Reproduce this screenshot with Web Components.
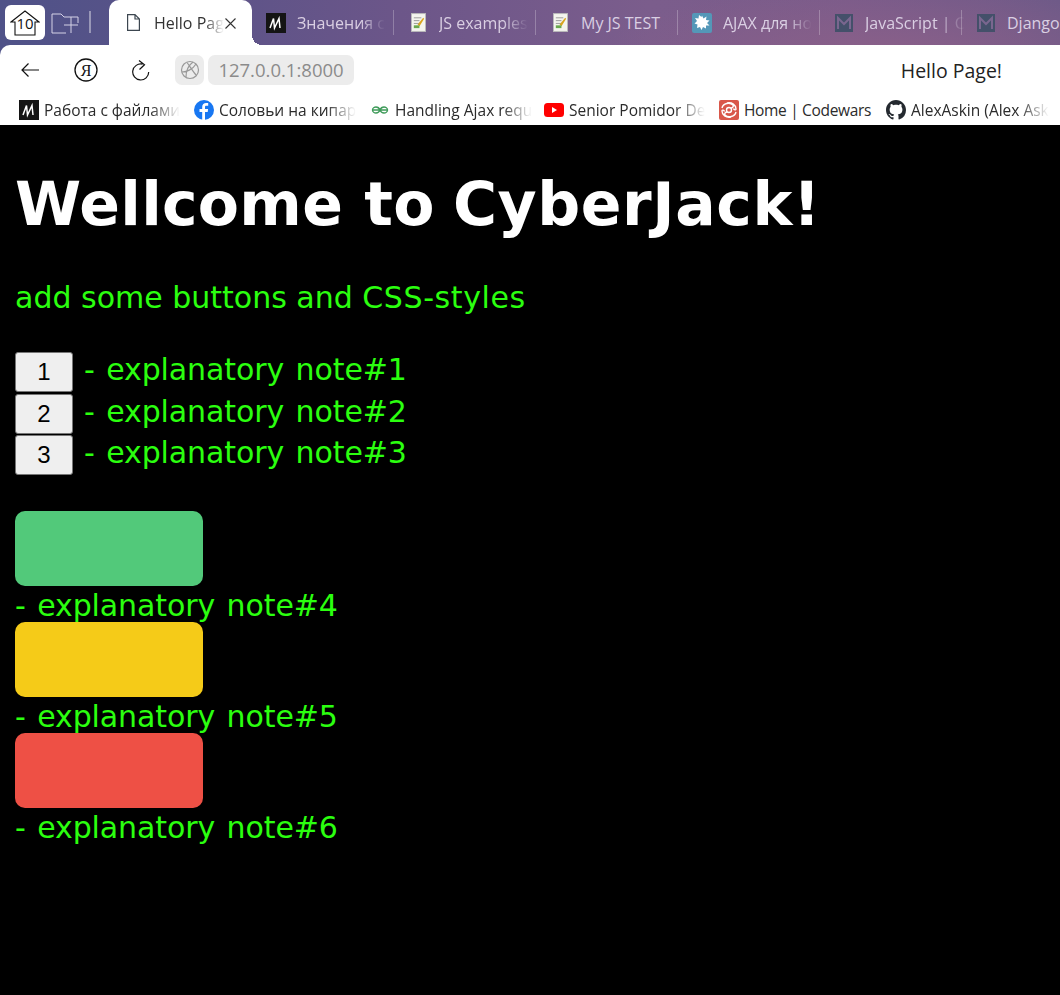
<!DOCTYPE html>
<html>
<head>
<meta charset="utf-8">
<title>Hello Page!</title>
<style>
  html, body { margin: 0; padding: 0; background: #000; }
  body { width: 1060px; height: 995px; overflow: hidden; }
</style>
</head>
<body>
<browser-chrome>
  <browser-tab slot="tabs" active label="Hello Pag">
    <svg slot="icon" width="13" height="17" viewBox="0 0 13 17" fill="none" stroke="#3c4650" stroke-width="1.2"><path d="M.6.6h7.400l4.400 4.400v11.400H.6zM8 .6v4.400h4.400"/></svg>
  </browser-tab>
  <browser-tab slot="tabs" label="Значения с">
    <svg slot="icon" width="20" height="20" viewBox="0 0 20 20"><rect width="20" height="20" fill="#141414"/><path d="M4 15L7.500 5.500 8.500 15 13 5.500 14 15" fill="none" stroke="#fff" stroke-width="1.500"/></svg>
  </browser-tab>
  <browser-tab slot="tabs" label="JS examples">
    <svg slot="icon" width="15" height="19" viewBox="0 0 16 20"><rect x=".5" y=".5" width="15" height="19" fill="#f4f4ee" stroke="#bbb"/><path d="M3 5h8M3 8h6M3 11h7" stroke="#999"/><path d="M7 12l6-7 1 1-5 8z" fill="#d9a520"/><rect x="3" y="13" width="6" height="3" fill="#6aa84f"/></svg>
  </browser-tab>
  <browser-tab slot="tabs" label="My JS TEST" nofade>
    <svg slot="icon" width="15" height="19" viewBox="0 0 16 20"><rect x=".5" y=".5" width="15" height="19" fill="#f4f4ee" stroke="#bbb"/><path d="M3 5h8M3 8h6M3 11h7" stroke="#999"/><path d="M7 12l6-7 1 1-5 8z" fill="#d9a520"/><rect x="3" y="13" width="6" height="3" fill="#6aa84f"/></svg>
  </browser-tab>
  <browser-tab slot="tabs" label="AJAX для но">
    <svg slot="icon" width="20" height="20" viewBox="0 0 20 20"><rect width="20" height="20" rx="2" fill="#5497b8"/><path d="M10 2.500l1.500 3 3-2-.5 3.500 3.500.5-2.500 2.500 2.500 2.500-3.500 0 0 3-3-1.500-1.500 3-1.500-3-3 1 .5-3.500-3-1 2.500-2.500-2-3 3.500.5.5-3.500 2.500 2z" fill="#fff"/></svg>
  </browser-tab>
  <browser-tab slot="tabs" label="JavaScript | С">
    <svg slot="icon" width="18" height="18" viewBox="0 0 18 18"><rect width="18" height="18" fill="#44506a"/><path d="M3 15V4l6 6 6-6v11" fill="none" stroke="#7a668f" stroke-width="2"/></svg>
  </browser-tab>
  <browser-tab slot="tabs" label="Django" nofade>
    <svg slot="icon" width="18" height="18" viewBox="0 0 18 18"><rect width="18" height="18" fill="#44506a"/><path d="M3 15V4l6 6 6-6v11" fill="none" stroke="#7a668f" stroke-width="2"/></svg>
  </browser-tab>

  <bookmark-item slot="bookmarks" label="Работа с файлами" w="175">
    <svg slot="icon" width="20" height="20" viewBox="0 0 20 20"><rect width="20" height="20" fill="#141414"/><path d="M4 15L7.500 5.500 8.500 15 13 5.500 14 15" fill="none" stroke="#fff" stroke-width="1.500"/></svg>
  </bookmark-item>
  <bookmark-item slot="bookmarks" label="Соловьи на кипар" w="176">
    <svg slot="icon" width="20" height="20" viewBox="0 0 20 20"><circle cx="10" cy="10" r="10" fill="#1877f2"/><path d="M11 20v-8h2.700l.4-3H11V7.200c0-.9.300-1.400 1.500-1.400H14.200V3.100c-.5-.1-1.300-.1-2.100-.1-2.200 0-3.900 1.300-3.900 3.900V9H5.500v3h2.700v8z" fill="#fff"/></svg>
  </bookmark-item>
  <bookmark-item slot="bookmarks" label="Handling Ajax requ" w="174">
    <svg slot="icon" width="18" height="10" viewBox="0 0 18 10" fill="none" stroke="#3f9b5a" stroke-width="1.400"><path d="M1 5h16M9 5C8 2.500 6.500 2 5 2S1.500 3 1.500 5 3.500 8 5 8s3-.5 4-3zM9 5c1-2.500 2.500-3 4-3s3.500 1 3.500 3-2 3-3.500 3-3-.5-4-3z"/></svg>
  </bookmark-item>
  <bookmark-item slot="bookmarks" label="Senior Pomidor De" w="175">
    <svg slot="icon" width="20" height="14" viewBox="0 0 20 14"><rect width="20" height="14" rx="3.500" fill="#f00"/><path d="M8 4l5 3-5 3z" fill="#fff"/></svg>
  </bookmark-item>
  <bookmark-item slot="bookmarks" label="Home | Codewars" w="167" nofade style="letter-spacing:-.33px">
    <svg slot="icon" width="20" height="20" viewBox="0 0 20 20"><rect width="20" height="20" rx="2" fill="#d9574a"/><g fill="none" stroke="#fff" stroke-width="1.400"><circle cx="10" cy="10" r="2.500"/><path d="M3 8c1-5 8-6 11-3 1 2-1 3-2 3M17 12c-1 5-8 6-11 3-1-2 1-3 2-3M8 3c5-1 9 2 9 6 0 1.500-2 1-2.500-.5M12 17c-5 1-9-2-9-6 0-1.500 2-1 2.500.5"/></g></svg>
  </bookmark-item>
  <bookmark-item slot="bookmarks" label="AlexAskin (Alex Ask" w="154">
    <svg slot="icon" width="20" height="20" viewBox="0 0 16 16"><path fill="#24292f" d="M8 0C3.580 0 0 3.580 0 8c0 3.540 2.290 6.530 5.470 7.590.4.070.55-.17.55-.38 0-.19-.01-.82-.01-1.490-2.010.37-2.530-.49-2.690-.94-.09-.23-.48-.94-.82-1.130-.28-.15-.68-.52-.01-.53.63-.01 1.080.58 1.230.82.720 1.210 1.870.87 2.330.66.070-.52.280-.87.510-1.070-1.780-.2-3.640-.89-3.640-3.950 0-.87.310-1.590.820-2.150-.08-.2-.36-1.020.08-2.120 0 0 .67-.21 2.200.82.640-.18 1.320-.27 2-.27s1.360.09 2 .27c1.530-1.040 2.200-.82 2.200-.82.440 1.100.16 1.920.08 2.120.51.560.82 1.270.82 2.150 0 3.070-1.870 3.750-3.650 3.950.29.250.54.730.54 1.480 0 1.070-.01 1.930-.01 2.200 0 .21.150.46.550.38A8.010 8.010 0 0016 8c0-4.420-3.580-8-8-8z"/></svg>
  </bookmark-item>
</browser-chrome>

<page-content>
  <h-title>Wellcome to <span style="margin-left:-3px;letter-spacing:.6px">CyberJack!</span></h-title>
  <note-text>add some buttons and <span style="letter-spacing:.6px">CSS-styles</span></note-text>
  <button-notes>
    <note-button num="1">- explanatory note#1</note-button>
    <note-button num="2">- explanatory note#2</note-button>
    <note-button num="3">- explanatory note#3</note-button>
  </button-notes>
  <color-notes>
    <color-note color="#52c97a">- explanatory note#4</color-note>
    <color-note color="#f5cb18">- explanatory note#5</color-note>
    <color-note color="#ee5045">- explanatory note#6</color-note>
  </color-notes>
</page-content>

<script>
class BrowserChrome extends HTMLElement {
  constructor() {
    super();
    this.attachShadow({ mode: 'open' });
    this.shadowRoot.innerHTML = `
      <style>
        :host { display: block; height: 125px; background: #fff; font-family: "Open Sans", "Noto Sans", sans-serif; }
        .strip {
          height: 45px; display: flex; align-items: flex-start; overflow: hidden;
          background:
            radial-gradient(ellipse 280px 70px at 880px 55px, #8a6089, transparent),
            linear-gradient(90deg, #4f5288 0, #5b5388 200px, #6c5689 400px, #7b5d8c 650px, #7a5b8a 850px, #6f5a88 1060px);
        }
        .home { display: flex; align-items: flex-start; padding: 5px 0 0 5px; width: 109px; height: 45px; box-sizing: border-box; flex: none; }
        .home-btn { width: 40px; height: 35px; background: #fff; border-radius: 6px; display: flex; align-items: center; justify-content: center; position: relative; color: #111; flex: none; }
        .home-btn span { position: absolute; top: 10px; left: 0; right: 0; text-align: center; font-size: 15px; line-height: 17px; }
        .folder { margin: 8px 0 0 6px; flex: none; }
        .divider { width: 2px; height: 22px; background: rgba(255,255,255,.4); margin: 6px 0 0 10px; flex: none; }
        .tabs { display: flex; }
        .toolbar-bg { background: #4f5288; }
        .toolbar { height: 50px; display: flex; align-items: center; background: #fff; border-top-left-radius: 10px; }
        .nav { display: flex; align-items: center; width: 175px; flex: none; padding-left: 20px; box-sizing: border-box; }
        .nav svg { display: block; flex: none; }
        .gap1 { width: 34px; } .gap2 { width: 34px; }
        .globe { width: 29px; height: 30px; border-radius: 7px; background: #ececec; display: flex; align-items: center; justify-content: center; flex: none; }
        .url { margin-left: 4px; width: 146px; height: 30px; border-radius: 7px; background: #ececec; color: #8b8b8b; font-size: 18.500px; line-height: 30px; text-align: center; flex: none; }
        .title { margin-left: auto; margin-right: 58px; font-size: 19.500px; color: #222; }
        .bookmarks { height: 30px; display: flex; align-items: center; padding-left: 19px; }
      </style>
      <div class="strip">
        <div class="home">
          <div class="home-btn">
            <svg width="30" height="26" viewBox="0 0 30 26" fill="none" stroke="#111" stroke-width="1.100"><path d="M5 12H1L15 1l14 11h-4v13H5z"/></svg>
            <span>10</span>
          </div>
          <svg class="folder" width="28" height="21" viewBox="0 0 28 21" fill="none" stroke="#d5d2e6" stroke-width="1"><path d="M15 20H1V1h9l3 3h14v6M20 4v16M13 12h14"/></svg>
          <div class="divider"></div>
        </div>
        <div class="tabs"><slot name="tabs"></slot></div>
      </div>
      <div class="toolbar-bg">
        <div class="toolbar">
          <div class="nav">
            <svg width="20" height="16" viewBox="0 0 20 16" fill="none" stroke="#111" stroke-width="1.200"><path d="M19 8H2M8.500 1.500L2 8l6.500 6.500"/></svg>
            <div class="gap1"></div>
            <svg width="24" height="24" viewBox="0 0 24 24" fill="none" stroke="#111" stroke-width="1.300"><circle cx="12" cy="12" r="11"/><text x="12" y="17.500" text-anchor="middle" font-family="Liberation Serif, serif" font-size="16" fill="#111" stroke="none">Я</text></svg>
            <div class="gap2"></div>
            <svg width="18" height="21" viewBox="0 0 18 21" fill="none" stroke="#111" stroke-width="1.200"><path d="M10.500 4.200A8 8 0 1 0 16.700 12M7 .5l5.500 4.200L7.500 9.500"/></svg>
          </div>
          <div class="globe">
            <svg width="20" height="20" viewBox="0 0 20 20" fill="none" stroke="#999" stroke-width="1.200"><circle cx="10" cy="10" r="8.500"/><path d="M2 12c5 0 11-3 14-8M6 17C6 10 9 5 13 2M7 2.500c3 4 6 9 9 12.500"/></svg>
          </div>
          <div class="url">127.0.0.1:8000</div>
          <div class="title">Hello Page!</div>
        </div>
      </div>
      <div class="bookmarks"><slot name="bookmarks"></slot></div>
    `;
  }
}

class BrowserTab extends HTMLElement {
  constructor() {
    super();
    this.attachShadow({ mode: 'open' });
  }
  connectedCallback() {
    const label = this.getAttribute('label');
    const active = this.hasAttribute('active');
    const fade = this.hasAttribute('nofade') ? '' : 'fade';
    this.shadowRoot.innerHTML = `
      <style>
        :host { display: block; flex: none; }
        .tab { box-sizing: border-box; width: 142px; height: 45px; display: flex; align-items: center; padding-left: 14px; gap: 11px; position: relative; color: #dacfe3; font-size: 16px; white-space: nowrap; }
        .tab.active { width: 143px; background: #fff; color: #333; border-radius: 10px 10px 0 0; }
        .tab.active::after { content: ""; position: absolute; right: -10px; bottom: 0; width: 10px; height: 10px; background: radial-gradient(circle at 100% 0, transparent 10px, #fff 10px); }
        .ico { width: 20px; display: flex; justify-content: center; flex: none; }
        .ico ::slotted(svg) { display: block; }
        .label { flex: none; }
        .fade { -webkit-mask-image: linear-gradient(90deg, #000 72%, transparent); mask-image: linear-gradient(90deg, #000 72%, transparent); }
        .close { position: absolute; right: 16px; top: 18px; }
        .sep { position: absolute; right: 0; top: 10px; width: 1px; height: 25px; background: rgba(255,255,255,.25); }
      </style>
      <div class="tab ${active ? 'active' : ''}">
        <span class="ico"><slot name="icon"></slot></span>
        <span class="label ${fade}">${label}</span>
        ${active ? '<svg class="close" width="11" height="11" viewBox="0 0 11 11" stroke="#333" stroke-width="1.100"><path d="M.5.5l10 10M10.500.5l-10 10"/></svg>' : '<span class="sep"></span>'}
      </div>`;
  }
}

class BookmarkItem extends HTMLElement {
  constructor() {
    super();
    this.attachShadow({ mode: 'open' });
  }
  connectedCallback() {
    const fade = this.hasAttribute('nofade') ? '' : 'fade';
    this.shadowRoot.innerHTML = `
      <style>
        :host { display: flex; flex: none; width: ${this.getAttribute('w')}px; align-items: center; gap: 5px; font-size: 15.500px; color: #2b2b2b; white-space: nowrap; }
        .ico { width: 20px; display: flex; justify-content: center; flex: none; }
        .ico ::slotted(svg) { display: block; }
        .fade { -webkit-mask-image: linear-gradient(90deg, #000 78%, transparent); mask-image: linear-gradient(90deg, #000 78%, transparent); }
      </style>
      <span class="ico"><slot name="icon"></slot></span>
      <span class="${fade}">${this.getAttribute('label')}</span>`;
  }
}

class PageContent extends HTMLElement {
  constructor() {
    super();
    this.attachShadow({ mode: 'open' });
    this.shadowRoot.innerHTML = `
      <style>
        :host { display: block; background: #000; height: 870px; padding: 42px 15px 0; box-sizing: border-box; font-family: "DejaVu Sans", Verdana, sans-serif; color: #2bff0f; word-spacing: 2px; letter-spacing: -.1px; }
      </style>
      <slot></slot>`;
  }
}

class HTitle extends HTMLElement {
  constructor() {
    super();
    this.attachShadow({ mode: 'open' });
    this.shadowRoot.innerHTML = `
      <style>
        :host { display: block; color: #fff; font-size: 60px; font-weight: 700; line-height: 75px; margin-bottom: 35px; letter-spacing: .28px; word-spacing: 0; }
      </style>
      <slot></slot>`;
  }
}

class NoteText extends HTMLElement {
  constructor() {
    super();
    this.attachShadow({ mode: 'open' });
    this.shadowRoot.innerHTML = `
      <style>
        :host { display: block; font-size: 30px; line-height: 42px; margin-bottom: 33px; letter-spacing: 0; word-spacing: 0; }
      </style>
      <slot></slot>`;
  }
}

class ButtonNotes extends HTMLElement {
  constructor() {
    super();
    this.attachShadow({ mode: 'open' });
    this.shadowRoot.innerHTML = `
      <style>
        :host { display: flex; flex-direction: column; margin-bottom: 34.500px; }
      </style>
      <slot></slot>`;
  }
}

class NoteButton extends HTMLElement {
  constructor() {
    super();
    this.attachShadow({ mode: 'open' });
  }
  connectedCallback() {
    this.shadowRoot.innerHTML = `
      <style>
        :host { display: flex; align-items: flex-start; height: 41.500px; gap: 11px; font-size: 30px; line-height: 36px; }
        button { width: 58px; height: 40px; padding: 0; font: 24px "Liberation Sans", Arial, sans-serif; color: #000; background: #efefef; border: 1px solid #767676; border-radius: 3px; flex: none; }
      </style>
      <button>${this.getAttribute('num')}</button>
      <span><slot></slot></span>`;
  }
}

class ColorNotes extends HTMLElement {
  constructor() {
    super();
    this.attachShadow({ mode: 'open' });
    this.shadowRoot.innerHTML = `
      <style>
        :host { display: block; }
      </style>
      <slot></slot>`;
  }
}

class ColorNote extends HTMLElement {
  constructor() {
    super();
    this.attachShadow({ mode: 'open' });
  }
  connectedCallback() {
    this.shadowRoot.innerHTML = `
      <style>
        :host { display: block; font-size: 30px; line-height: 32px; }
        .box { width: 188px; height: 75px; border-radius: 10px; background: ${this.getAttribute('color')}; margin-bottom: 4px; }
      </style>
      <div class="box"></div>
      <slot></slot>`;
  }
}

customElements.define('browser-chrome', BrowserChrome);
customElements.define('browser-tab', BrowserTab);
customElements.define('bookmark-item', BookmarkItem);
customElements.define('page-content', PageContent);
customElements.define('h-title', HTitle);
customElements.define('note-text', NoteText);
customElements.define('button-notes', ButtonNotes);
customElements.define('note-button', NoteButton);
customElements.define('color-notes', ColorNotes);
customElements.define('color-note', ColorNote);
</script>
</body>
</html>
